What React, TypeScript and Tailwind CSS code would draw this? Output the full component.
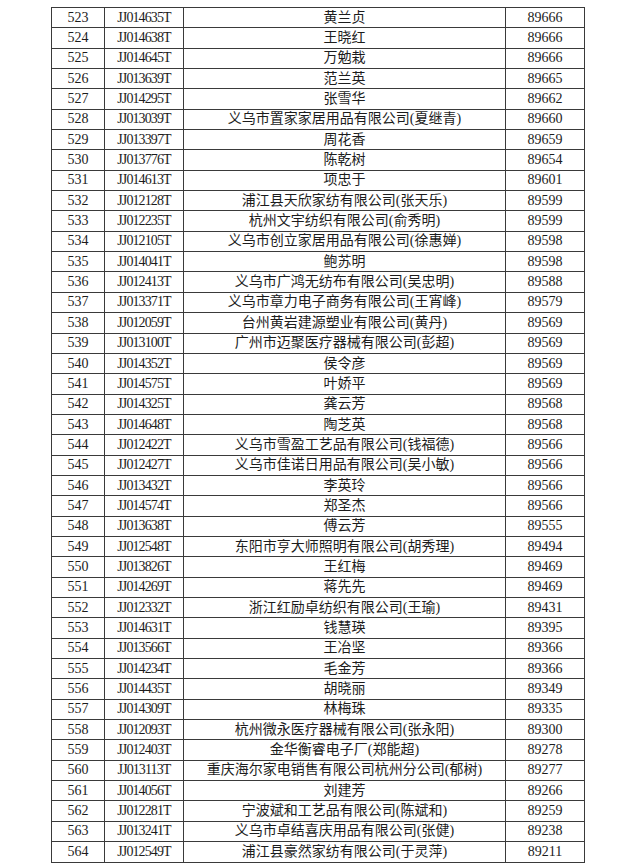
const rows: [number, string, string, string][] = [
  [523, "JJ014635T", "黄兰贞", "89666"],
  [524, "JJ014638T", "王晓红", "89666"],
  [525, "JJ014645T", "万勉栽", "89666"],
  [526, "JJ013639T", "范兰英", "89665"],
  [527, "JJ014295T", "张雪华", "89662"],
  [528, "JJ013039T", "义乌市置家家居用品有限公司(夏继青)", "89660"],
  [529, "JJ013397T", "周花香", "89659"],
  [530, "JJ013776T", "陈乾树", "89654"],
  [531, "JJ014613T", "项忠于", "89601"],
  [532, "JJ012128T", "浦江县天欣家纺有限公司(张天乐)", "89599"],
  [533, "JJ012235T", "杭州文宇纺织有限公司(俞秀明)", "89599"],
  [534, "JJ012105T", "义乌市创立家居用品有限公司(徐惠婵)", "89598"],
  [535, "JJ014041T", "鲍苏明", "89598"],
  [536, "JJ012413T", "义乌市广鸿无纺布有限公司(吴忠明)", "89588"],
  [537, "JJ013371T", "义乌市章力电子商务有限公司(王宵峰)", "89579"],
  [538, "JJ012059T", "台州黄岩建源塑业有限公司(黄丹)", "89569"],
  [539, "JJ013100T", "广州市迈聚医疗器械有限公司(彭超)", "89569"],
  [540, "JJ014352T", "侯令彦", "89569"],
  [541, "JJ014575T", "叶娇平", "89569"],
  [542, "JJ014325T", "龚云芳", "89568"],
  [543, "JJ014648T", "陶芝英", "89568"],
  [544, "JJ012422T", "义乌市雪盈工艺品有限公司(钱福德)", "89566"],
  [545, "JJ012427T", "义乌市佳诺日用品有限公司(吴小敏)", "89566"],
  [546, "JJ013432T", "李英玲", "89566"],
  [547, "JJ014574T", "郑圣杰", "89566"],
  [548, "JJ013638T", "傅云芳", "89555"],
  [549, "JJ012548T", "东阳市亨大师照明有限公司(胡秀理)", "89494"],
  [550, "JJ013826T", "王红梅", "89469"],
  [551, "JJ014269T", "蒋先先", "89469"],
  [552, "JJ012332T", "浙江红励卓纺织有限公司(王瑜)", "89431"],
  [553, "JJ014631T", "钱慧瑛", "89395"],
  [554, "JJ013566T", "王冶坚", "89366"],
  [555, "JJ014234T", "毛金芳", "89366"],
  [556, "JJ014435T", "胡晓丽", "89349"],
  [557, "JJ014309T", "林梅珠", "89335"],
  [558, "JJ012093T", "杭州微永医疗器械有限公司(张永阳)", "89300"],
  [559, "JJ012403T", "金华衡睿电子厂(郑能超)", "89278"],
  [560, "JJ013113T", "重庆海尔家电销售有限公司杭州分公司(郁树)", "89277"],
  [561, "JJ014056T", "刘建芳", "89266"],
  [562, "JJ012281T", "宁波斌和工艺品有限公司(陈斌和)", "89259"],
  [563, "JJ013241T", "义乌市卓结喜庆用品有限公司(张健)", "89238"],
  [564, "JJ012549T", "浦江县豪然家纺有限公司(于灵萍)", "89211"],
]

export default function App() {
  return (
    <div className="min-h-[868px] w-[640px] bg-white pl-[51px] pt-[7px] font-['Liberation_Serif','Noto_Sans_CJK_SC',serif] text-[14px] text-[#1c1c1c]">
      <table className="h-[856px] w-[533px] table-fixed border-collapse">
        <colgroup>
          <col className="w-[53px]" />
          <col className="w-[79px]" />
          <col className="w-[322px]" />
          <col className="w-[79px]" />
        </colgroup>
        <tbody>
          {rows.map(([no, id, name, score]) => (
            <tr key={no} className="leading-none">
              <td className="border border-[#3a3a3a] p-0 text-center">{no}</td>
              <td className="border border-[#3a3a3a] p-0 text-center tracking-[-0.9px]">{id}</td>
              <td className="border border-[#3a3a3a] p-0 text-center whitespace-nowrap">{name}</td>
              <td className="border border-[#3a3a3a] p-0 text-center">{score}</td>
            </tr>
          ))}
        </tbody>
      </table>
    </div>
  )
}
